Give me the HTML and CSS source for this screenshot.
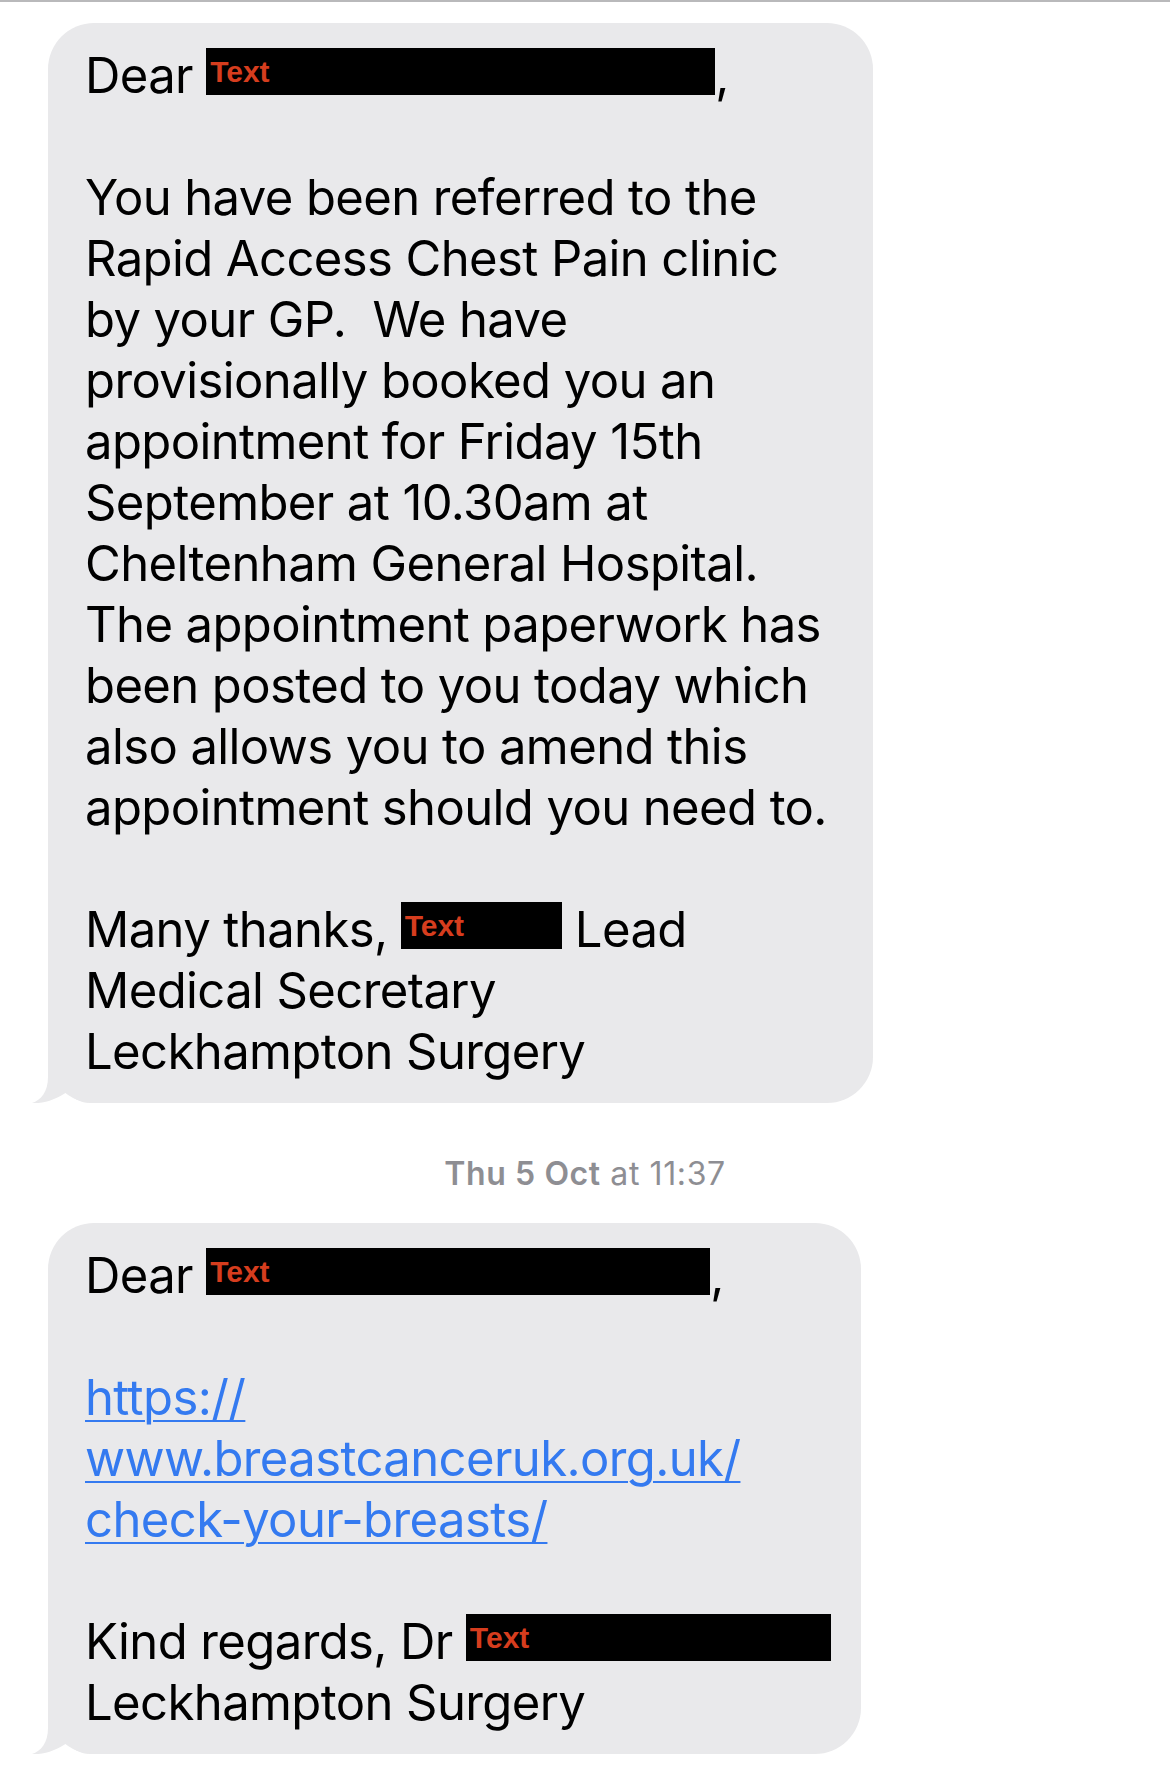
FILE: index.html
```html
<!DOCTYPE html>
<html lang="en">
  <head>
    <meta charset="UTF-8" />
    <meta name="viewport" content="width=device-width, initial-scale=1.0" />
    <title>Messages</title>
    <link rel="stylesheet" href="styles.css">
  </head>
  <body>
    <div class="thread">
      <!-- first message -->
      <div class="bubble bubble-first">
        <p class="msg">
          Dear <span class="redact redact-name1"><span class="redact-label">Text</span></span>,<br>
          <br>
          You have been referred to the<br>
          Rapid Access Chest Pain clinic<br>
          by your GP.&nbsp; We have<br>
          provisionally booked you an<br>
          appointment for Friday 15th<br>
          September at 10.30am at<br>
          Cheltenham General Hospital.<br>
          The appointment paperwork has<br>
          been posted to you today which<br>
          also allows you to amend this<br>
          appointment should you need to.<br>
          <br>
          Many thanks, <span class="redact redact-short"><span class="redact-label">Text</span></span> Lead<br>
          Medical Secretary<br>
          Leckhampton Surgery
        </p>
        <svg class="tail" viewBox="-16 -50 66 50" width="66" height="50">
          <path d="M0 -50 L0 -26 C0 -11 -7 -3 -16 0 C-4 1 9 -4 19 -11 C25 -5 31 0 44 0 L50 0 L50 -50 Z" />
        </svg>
      </div>

      <div class="stamp"><span class="stamp-day">Thu 5 Oct</span> at 11:37</div>

      <!-- second message -->
      <div class="bubble bubble-second">
        <p class="msg">
          Dear <span class="redact redact-name2"><span class="redact-label">Text</span></span>,<br>
          <br>
          <a class="link" href="#">https://<br>www.breastcanceruk.org.uk/<br>check-your-breasts/</a><br>
          <br>
          Kind regards, Dr <span class="redact redact-dr"><span class="redact-label">Text</span></span><br>
          Leckhampton Surgery
        </p>
        <svg class="tail" viewBox="-16 -50 66 50" width="66" height="50">
          <path d="M0 -50 L0 -26 C0 -11 -7 -3 -16 0 C-4 1 9 -4 19 -11 C25 -5 31 0 44 0 L50 0 L50 -50 Z" />
        </svg>
      </div>
    </div>
  </body>
</html>
```

FILE: styles.css
```css
body {
  margin: 0;
  background-color: #fff;
  border-top: 2px solid #b9b9bb;
  font-family: Inter, "Noto Sans", sans-serif;
}
.thread {
  display: flex;
  flex-direction: column;
  align-items: flex-start;
  padding: 21px 0 0 48px;
}
.bubble {
  position: relative;
  box-sizing: border-box;
  background-color: #e9e9eb;
  border-radius: 46px;
  padding: 22px 20px 21px 37px;
}
.bubble-first {
  width: 825px;
}
.bubble-second {
  width: 813px;
}
.msg {
  margin: 0;
  font-size: 49px;
  line-height: 61px;
  letter-spacing: -0.6px;
  color: #000;
  white-space: nowrap;
  position: relative;
  z-index: 1;
}
.tail {
  position: absolute;
  left: -16px;
  bottom: 0;
  fill: #e9e9eb;
}
.link {
  color: #347af0;
  text-decoration: underline;
  text-decoration-thickness: 2px;
  text-underline-offset: 5px;
}
.redact {
  display: inline-block;
  vertical-align: top;
  margin-top: 3px;
  height: 47px;
  background-color: #000;
  box-sizing: border-box;
  padding: 9px 0 0 4px;
  letter-spacing: 0;
}
.redact-name1 {
  width: 509px;
}
.redact-name2 {
  width: 504px;
}
.redact-short {
  width: 161px;
}
.redact-dr {
  width: 365px;
}
.redact-label {
  display: block;
  font-family: "Liberation Sans", Arial, sans-serif;
  font-weight: bold;
  font-size: 30px;
  line-height: 30px;
  color: #d63d1e;
}
.stamp {
  align-self: stretch;
  margin: 52px 48px 30px 0;
  text-align: center;
  font-size: 32px;
  line-height: 38px;
  letter-spacing: 0.6px;
  color: #8e8e93;
}
.stamp-day {
  font-weight: 600;
}
```
